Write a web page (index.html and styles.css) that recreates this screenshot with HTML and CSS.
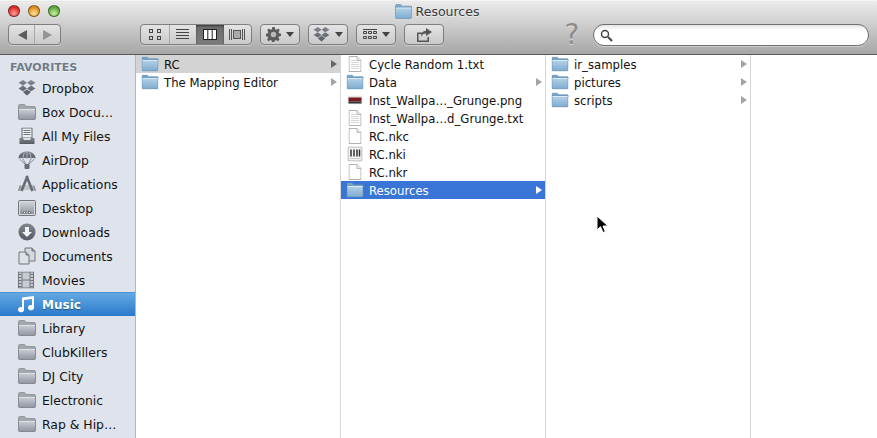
FILE: index.html
```html
<!DOCTYPE html>
<html lang="en">
<head>
<meta charset="utf-8">
<title>Resources</title>
<link rel="stylesheet" href="styles.css">
</head>
<body>
<svg class="defs" width="0" height="0" aria-hidden="true">
  <defs>
    <linearGradient id="gBlue" x1="0" y1="0" x2="0" y2="1"><stop offset="0" stop-color="#b4d2e8"/><stop offset="1" stop-color="#7fabcf"/></linearGradient>
    <linearGradient id="gBlueTab" x1="0" y1="0" x2="0" y2="1"><stop offset="0" stop-color="#84aecf"/><stop offset="1" stop-color="#6d9bc0"/></linearGradient>
    <linearGradient id="gGray" x1="0" y1="0" x2="0" y2="1"><stop offset="0" stop-color="#cfd2d8"/><stop offset="1" stop-color="#8f949e"/></linearGradient>
    <linearGradient id="gIcon" x1="0" y1="0" x2="0" y2="1"><stop offset="0" stop-color="#80858e"/><stop offset="1" stop-color="#565b64"/></linearGradient>
    <symbol id="folderBlue" viewBox="0 0 17 15">
      <path d="M.5 3V1.800C.5 1 1 .5 1.800.5h3.400c.6 0 .9.3 1.200.8l.5.9h8.800c.6 0 1.300.5 1.300 1.200V4H.5z" fill="url(#gBlueTab)" stroke="#5f8db3" stroke-width=".6"/>
      <path d="M.5 3.500h16v10.200c0 .5-.4.8-.8.8H1.300c-.5 0-.8-.3-.8-.8z" fill="url(#gBlue)" stroke="#6a97bc" stroke-width=".7"/>
      <path d="M1 4h15" stroke="#dcebf5" stroke-width="1"/>
    </symbol>
    <symbol id="folderGray" viewBox="0 0 18 16">
      <path d="M.5 4V2C.5 1 1 .5 2 .5h4c.6 0 1 .3 1.300.8l.6 1.200H16c.9 0 1.500.6 1.500 1.500V5H.5z" fill="#a3a7af" stroke="#7b808a" stroke-width=".7"/>
      <path d="M.5 4.500h17v10c0 .6-.4 1-1 1h-15c-.6 0-1-.4-1-1z" fill="url(#gGray)" stroke="#777c86" stroke-width=".8"/>
      <path d="M1 5.200h16" stroke="#e8eaee" stroke-width="1"/>
    </symbol>
    <symbol id="doc" viewBox="0 0 13 16">
      <path d="M.5.5h8l4 4v11H.5z" fill="#fff" stroke="#a9a9a9" stroke-width=".9"/>
      <path d="M8.500.5v4h4" fill="#e9e9e9" stroke="#a9a9a9" stroke-width=".8"/>
    </symbol>
    <symbol id="docText" viewBox="0 0 13 16">
      <path d="M.5.5h8l4 4v11H.5z" fill="#fff" stroke="#a9a9a9" stroke-width=".9"/>
      <path d="M8.500.5v4h4" fill="#e9e9e9" stroke="#a9a9a9" stroke-width=".8"/>
      <path d="M2.500 4.500h5M2.500 6.500h8M2.500 8.500h8M2.500 10.500h8M2.500 12.500h8" stroke="#d6d6d6" stroke-width="1"/>
    </symbol>
    <symbol id="dropbox" viewBox="0 0 18 16">
      <path d="M5 0 9 2.800 5 5.600 .5 2.800zM13 0l4.500 2.800L13 5.600 9 2.800zM5 5.600l4 2.800-4 2.800-4.500-2.800zM13 5.600l4.500 2.800-4.500 2.800-4-2.800zM5 12l4-2.600 4 2.600-4 3.500z" fill="url(#gIcon)"/>
    </symbol>
  </defs>
</svg>

<div class="window">
  <header class="toolbar">
    <div class="titlebar">
      <div class="lights">
        <span class="light red"></span><span class="light yellow"></span><span class="light green"></span>
      </div>
      <div class="title">
        <svg class="title-icon" width="17" height="15"><use href="#folderBlue"/></svg>
        <span>Resources</span>
      </div>
      <div></div>
    </div>
    <div class="tools">
      <div class="btn-group nav">
        <button class="seg"><svg width="12" height="10" viewBox="0 0 12 10"><path d="M11 0v10L2 5z" fill="#5d5d5d"/></svg></button>
        <button class="seg"><svg width="12" height="10" viewBox="0 0 12 10"><path d="M1 0v10l9-5z" fill="#959595"/></svg></button>
      </div>
      <div class="btn-group views">
        <button class="seg"><svg width="12" height="11" viewBox="0 0 12 11" fill="none" stroke="#444"><rect x=".5" y=".5" width="3" height="3"/><rect x="8.500" y=".5" width="3" height="3"/><rect x=".5" y="7.500" width="3" height="3"/><rect x="8.500" y="7.500" width="3" height="3"/></svg></button>
        <button class="seg"><svg width="13" height="11" viewBox="0 0 13 11" stroke="#444"><path d="M0 .5h13M0 3.500h13M0 6.500h13M0 9.500h13"/></svg></button>
        <button class="seg active"><svg width="14" height="11" viewBox="0 0 14 11" fill="#fff" stroke="#222"><rect x=".5" y=".5" width="13" height="10"/><path d="M4.800 .5v10M9.200 .5v10"/></svg></button>
        <button class="seg"><svg width="16" height="11" viewBox="0 0 16 11" fill="none" stroke="#555"><path d="M.5 0v11M15.500 0v11M2.500 0v11M13.500 0v11"/><rect x="4.500" y="1.500" width="7" height="8" fill="#aaa"/></svg></button>
      </div>
      <button class="btn"><svg width="15" height="15" viewBox="0 0 15 15"><path d="M6.300 0h2.400l.4 2.200 1.300.5L12.300 1.500 13.800 3.200l-1.300 1.800.6 1.300 1.900.4v2.400l-2.100.4-.5 1.300 1.200 1.800-1.700 1.600-1.800-1.200-1.300.5-.4 2h-2.400l-.4-2-1.300-.5-1.800 1.200L1 12.800l1.200-1.800-.5-1.300L0 9.300V6.700l1.800-.4.6-1.300L1.200 3.200 2.700 1.500l1.900 1.200 1.300-.5z" fill="#5c5c5c"/><circle cx="7.500" cy="7.500" r="2.800" fill="#b8b8b8"/></svg><span class="caret"></span></button>
      <button class="btn"><svg width="17" height="15" viewBox="0 0 18 16"><use href="#dropbox"/></svg><span class="caret"></span></button>
      <button class="btn"><svg width="14" height="11" viewBox="0 0 14 11" stroke="#444" fill="none"><path d="M0 .5h14"/><path d="M.5 2.500h3v2h-3zM5.500 2.500h3v2h-3zM10.500 2.500h3v2h-3zM.5 7.500h3v2h-3zM5.500 7.500h3v2h-3zM10.500 7.500h3v2h-3z"/></svg><span class="caret"></span></button>
      <button class="btn share"><svg width="16" height="14" viewBox="0 0 16 14"><path d="M1 4.500h5v1.500H2.500v6.500h9V9H13v5H1z" fill="#555"/><path d="M10 0l6 4-6 4V5.500C7.500 5.500 6 6.500 5 9c0-4 2-6 5-6.200z" fill="#555"/></svg></button>
      <span class="help">?</span>
      <div class="search"><svg width="13" height="13" viewBox="0 0 13 13" fill="none" stroke="#444"><circle cx="5" cy="5" r="3.500" stroke-width="1.500"/><path d="M8 8l4 4" stroke-width="2"/></svg></div>
    </div>
  </header>

  <div class="body">
    <nav class="sidebar">
      <h2 class="side-head">FAVORITES</h2>
      <a class="side-row"><svg class="si" width="18" height="16"><use href="#dropbox"/></svg><span class="label">Dropbox</span></a>
      <a class="side-row"><svg class="si" width="18" height="16"><use href="#folderGray"/></svg><span class="label">Box Docu…</span></a>
      <a class="side-row"><svg class="si" width="18" height="17" viewBox="0 0 18 17"><path d="M4 .5h10v10H4z" fill="#eceef1" stroke="#666b74"/><path d="M5.500 3h7M5.500 5h7M5.500 7h7" stroke="#70757e"/><path d="M1.500 10.500h15v6h-15z" fill="url(#gIcon)"/><path d="M5 10.500l1 2h6l1-2z" fill="#dde0e4"/></svg><span class="label">All My Files</span></a>
      <a class="side-row"><svg class="si" width="18" height="18" viewBox="0 0 18 18"><path d="M.5 7.500C.5 3 4.500.5 9 .5s8.500 2.500 8.500 7c-1.500-1-3-1-4.200 0-1.300-1-2.900-1-4.300 0-1.400-1-3-1-4.300 0-1.200-1-2.700-1-4.200 0z" fill="url(#gIcon)"/><path d="M6.300 1.500 4.700 7.500M11.700 1.500l1.600 6M9 .5v7" stroke="#c8ccd2" stroke-width=".8" fill="none"/><path d="M1.500 8 7.500 13.500M5 8l3 5.500M13 8l-3 5.500M16.500 8l-6 5.500" stroke="#70757e" stroke-width=".8" fill="none"/><rect x="6.500" y="13" width="5" height="5" rx="1.200" fill="#666b74"/></svg><span class="label">AirDrop</span></a>
      <a class="side-row"><svg class="si" width="18" height="18" viewBox="0 0 18 18" fill="none"><path d="M1 10h16v5H1z" fill="#bfc3ca"/><path d="M9.500 1 3.500 16M8.500 1l6 15" stroke="#666b74" stroke-width="2.600"/><path d="M.5 16l2-5M17.500 16l-2-5" stroke="#8a8f98" stroke-width="1.600"/></svg><span class="label">Applications</span></a>
      <a class="side-row"><svg class="si" width="18" height="16" viewBox="0 0 18 16"><rect x=".5" y=".5" width="17" height="15" rx="1" fill="#d6d9de" stroke="#70757e"/><path d="M2 2h14v12H2z" fill="url(#gGray)"/><path d="M5 11.500h8v2H5z" fill="#6d727b"/><path d="M6 12.500h1M8.500 12.500h1M11 12.500h1" stroke="#fff"/></svg><span class="label">Desktop</span></a>
      <a class="side-row"><svg class="si" width="18" height="18" viewBox="0 0 18 18"><circle cx="9" cy="9" r="8.500" fill="url(#gIcon)"/><path d="M7 4h4v5h3l-5 5-5-5h3z" fill="#f2f3f5"/></svg><span class="label">Downloads</span></a>
      <a class="side-row"><svg class="si" width="18" height="18" viewBox="0 0 18 18"><path d="M7 1h7l3 3v10H7z" fill="#d5d8dd" stroke="#70757e"/><path d="M1 5h7l3 3v9H1z" fill="#dde0e5" stroke="#70757e"/><path d="M8 5v3h3M14 1v3h3" fill="#9ea3ac" stroke="#70757e"/></svg><span class="label">Documents</span></a>
      <a class="side-row"><svg class="si" width="16" height="17" viewBox="0 0 16 17"><rect x=".5" y=".5" width="15" height="16" fill="#c8ccd2" stroke="#70757e"/><path d="M4 .5v16M12 .5v16M4 8.500h8" stroke="#70757e"/><path d="M.5 3h3M.5 6h3M.5 9h3M.5 12h3M.5 15h3M12.500 3h3M12.500 6h3M12.500 9h3M12.500 12h3M12.500 15h3" stroke="#70757e"/></svg><span class="label">Movies</span></a>
      <a class="side-row selected"><svg class="si" width="18" height="18" viewBox="0 0 18 18"><path d="M6 4v9.500a3 2.600 0 1 1-2-2.300V1.500L16 0v11.500a3 2.600 0 1 1-2-2.300V3z" fill="#fff"/></svg><span class="label">Music</span></a>
      <a class="side-row"><svg class="si" width="18" height="16"><use href="#folderGray"/></svg><span class="label">Library</span></a>
      <a class="side-row"><svg class="si" width="18" height="16"><use href="#folderGray"/></svg><span class="label">ClubKillers</span></a>
      <a class="side-row"><svg class="si" width="18" height="16"><use href="#folderGray"/></svg><span class="label">DJ City</span></a>
      <a class="side-row"><svg class="si" width="18" height="16"><use href="#folderGray"/></svg><span class="label">Electronic</span></a>
      <a class="side-row"><svg class="si" width="18" height="16"><use href="#folderGray"/></svg><span class="label">Rap &amp; Hip…</span></a>
    </nav>

    <section class="column">
      <div class="row current"><svg class="fi" width="17" height="15"><use href="#folderBlue"/></svg><span class="name">RC</span><i class="arrow dark"></i></div>
      <div class="row"><svg class="fi" width="17" height="15"><use href="#folderBlue"/></svg><span class="name">The Mapping Editor</span><i class="arrow"></i></div>
    </section>

    <section class="column">
      <div class="row"><svg class="fi" width="13" height="16"><use href="#docText"/></svg><span class="name">Cycle Random 1.txt</span></div>
      <div class="row"><svg class="fi" width="17" height="15"><use href="#folderBlue"/></svg><span class="name">Data</span><i class="arrow"></i></div>
      <div class="row"><svg class="fi" width="15" height="9" viewBox="0 0 15 9"><rect width="15" height="9" fill="#e8e4e4"/><rect x="1" y="2" width="13" height="4" fill="#7a1a22"/><rect x="1" y="6" width="13" height="2" fill="#333"/></svg><span class="name">Inst_Wallpa…_Grunge.png</span></div>
      <div class="row"><svg class="fi" width="13" height="16"><use href="#docText"/></svg><span class="name">Inst_Wallpa…d_Grunge.txt</span></div>
      <div class="row"><svg class="fi" width="13" height="16"><use href="#doc"/></svg><span class="name">RC.nkc</span></div>
      <div class="row"><svg class="fi" width="15" height="15" viewBox="0 0 15 15"><rect x=".5" y=".5" width="14" height="14" rx="1" fill="#f4f4f4" stroke="#aaa"/><path d="M3.500 3v7M6.500 3v7M9.500 3v7M12 3v7" stroke="#333" stroke-width="1.500"/><path d="M2 12h11" stroke="#ccc"/></svg><span class="name">RC.nki</span></div>
      <div class="row"><svg class="fi" width="13" height="16"><use href="#doc"/></svg><span class="name">RC.nkr</span></div>
      <div class="row chosen"><svg class="fi" width="17" height="15"><use href="#folderBlue"/></svg><span class="name">Resources</span><i class="arrow white"></i></div>
    </section>

    <section class="column">
      <div class="row"><svg class="fi" width="17" height="15"><use href="#folderBlue"/></svg><span class="name">ir_samples</span><i class="arrow"></i></div>
      <div class="row"><svg class="fi" width="17" height="15"><use href="#folderBlue"/></svg><span class="name">pictures</span><i class="arrow"></i></div>
      <div class="row"><svg class="fi" width="17" height="15"><use href="#folderBlue"/></svg><span class="name">scripts</span><i class="arrow"></i></div>
    </section>

    <section class="column last"></section>
  </div>

  <svg class="cursor" width="14" height="20" viewBox="0 0 14 20"><path d="M1 1v14l3.500-3.300L7 17.500l2.300-1L7 11h5z" fill="#000" stroke="#fff" stroke-width="1"/></svg>
</div>
</body>
</html>
```

FILE: styles.css
```css
* { box-sizing: border-box; }

html, body {
  margin: 0;
  padding: 0;
  height: 100%;
  overflow: hidden;
  background: #fff;
}

.defs { position: absolute; }

.window {
  position: relative;
  display: flex;
  flex-direction: column;
  width: 877px;
  height: 438px;
  font-family: "DejaVu Sans", "Liberation Sans", sans-serif;
  font-size: 12px;
  color: #111;
}

.toolbar {
  height: 55px;
  flex: none;
  display: flex;
  flex-direction: column;
  background: linear-gradient(#ebebeb, #d8d8d8 30%, #a6a6a6);
  border-bottom: 1px solid #585858;
  border-top: 1px solid #f4f4f4;
}

.titlebar {
  height: 22px;
  flex: none;
  display: grid;
  grid-template-columns: 1fr auto 1fr;
  align-items: center;
  padding-bottom: 2px;
}

.lights {
  display: flex;
  gap: 8px;
  padding-left: 8px;
}

.light {
  width: 12px;
  height: 12px;
  border-radius: 50%;
  border: 1px solid rgba(0, 0, 0, .45);
}
.red { background: radial-gradient(circle at 50% 75%, #ff9c95, #d92b28 70%); }
.yellow { background: radial-gradient(circle at 50% 75%, #ffe39a, #dc8c18 70%); }
.green { background: radial-gradient(circle at 50% 75%, #c8f0a0, #5aa63a 70%); }

.title {
  display: flex;
  align-items: center;
  gap: 4px;
  margin-left: -3px;
  color: #3a3a3a;
  font-size: 12.5px;
  text-shadow: 0 1px 0 rgba(255, 255, 255, .5);
}

.tools {
  display: flex;
  align-items: flex-start;
  padding: 1px 8px 0;
  height: 24px;
}

button {
  margin: 0;
  padding: 0;
  font: inherit;
  background: none;
  border: none;
  display: flex;
  align-items: center;
  justify-content: center;
}

.btn-group, .btn {
  height: 21px;
  border: 1px solid #7f7f7f;
  border-radius: 4px;
  background: linear-gradient(#e4e4e4, #c9c9c9);
  box-shadow: 0 1px 0 rgba(255, 255, 255, .35);
}

.btn-group { display: flex; overflow: hidden; }
.seg { height: 100%; }
.seg + .seg { border-left: 1px solid #a9a9a9; }

.nav { width: 53px; margin-right: 79px; }
.nav .seg { flex: 1; }

.views { width: 112px; margin-right: 8px; }
.views .seg { width: 28px; }
.views .seg.active {
  background: linear-gradient(#6a6a6a, #7c7c7c);
  box-shadow: inset 0 1px 2px rgba(0, 0, 0, .5);
  border-left: none;
}
.views .seg.active + .seg { border-left: none; }

.btn {
  width: 40px;
  margin-right: 8px;
  gap: 5px;
}

.caret {
  width: 0;
  height: 0;
  border-left: 4px solid transparent;
  border-right: 4px solid transparent;
  border-top: 5px solid #444;
}

.help {
  margin-left: 111px;
  width: 18px;
  text-align: center;
  font-size: 28px;
  line-height: 22px;
  color: #8c8c8c;
  text-shadow: 0 1px 0 rgba(255, 255, 255, .5);
}

.search {
  margin-left: 12px;
  width: 276px;
  height: 22px;
  border: 1px solid #6f6f6f;
  border-radius: 11px;
  background: linear-gradient(#e4e4e4, #fff 25%);
  display: flex;
  align-items: center;
  padding-left: 6px;
  box-shadow: 0 1px 0 rgba(255, 255, 255, .4);
}

.body {
  flex: 1;
  display: flex;
  min-height: 0;
}

.sidebar {
  width: 136px;
  flex: none;
  background: #dfe4ec;
  border-right: 1px solid #b4b8be;
  padding-top: 6px;
}

.side-head {
  margin: 0;
  height: 15px;
  padding-left: 10px;
  font-size: 11px;
  line-height: 14px;
  font-weight: 700;
  color: #707b8a;
  text-shadow: 0 1px 0 rgba(255, 255, 255, .6);
}

.side-row {
  position: relative;
  display: flex;
  align-items: center;
  height: 24px;
  padding-left: 42px;
  white-space: nowrap;
  color: #111;
  font-size: 12.4px;
}

.label { padding-top: 1px; }

.si {
  position: absolute;
  left: 18px;
  top: 50%;
  transform: translateY(-50%);
}

.side-row.selected {
  color: #fff;
  font-size: 12px;
  font-weight: 700;
  background: linear-gradient(#65a9e3, #2a79cc);
  border-top: 1px solid #4a94d8;
  text-shadow: 0 1px 1px rgba(0, 0, 0, .4);
}

.column {
  width: 205px;
  flex: none;
  border-right: 1px solid #d6d6d6;
}

.column.last { flex: 1; border-right: none; }

.row {
  display: flex;
  align-items: center;
  height: 18px;
  padding-left: 28px;
  padding-right: 3px;
  position: relative;
  white-space: nowrap;
  font-size: 11.7px;
}

.fi {
  position: absolute;
  left: 14px;
  top: 50%;
  transform: translate(-50%, -50%);
}

.name { flex: 1; padding-top: 2px; }

.row.current { background: #d3d3d3; }
.row.chosen { background: #3875d7; color: #fff; }

.arrow {
  width: 0;
  height: 0;
  border-top: 4px solid transparent;
  border-bottom: 4px solid transparent;
  border-left: 6px solid #a4a4a4;
}
.arrow.dark { border-left-color: #666; }
.arrow.white { border-left-color: #fff; }

.cursor {
  position: absolute;
  left: 596px;
  top: 215px;
}
```
